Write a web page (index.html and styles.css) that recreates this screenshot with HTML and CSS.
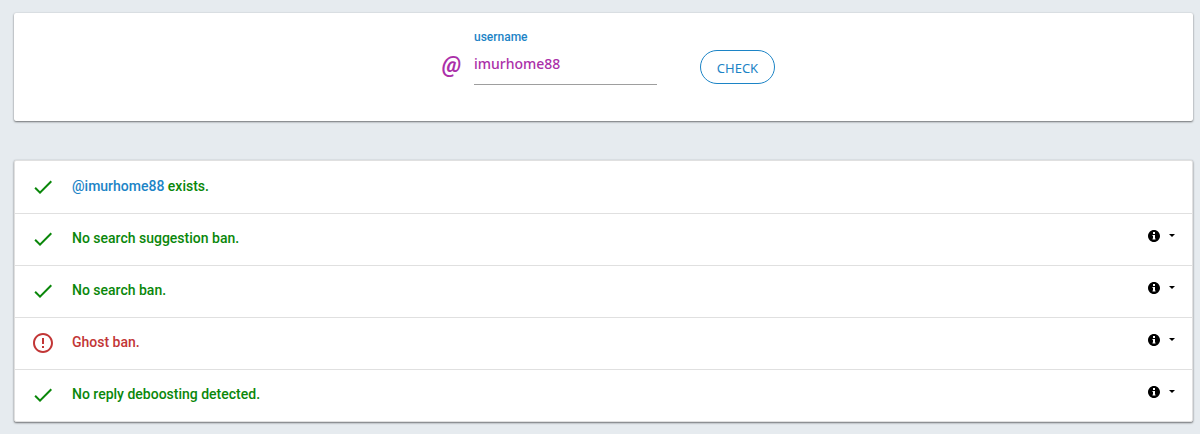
FILE: index.html
```html
<!DOCTYPE html>
<html lang="en">
<head>
    <meta charset="UTF-8">
    <meta name="viewport" content="width=device-width, initial-scale=1.0">
    <title>Shadowban Test</title>
    <link rel="stylesheet" href="styles.css">
</head>
<body>
    <!-- Shared icons -->
    <svg class="icon-defs" aria-hidden="true">
        <symbol id="icon-check" viewBox="0 0 24 24">
            <path d="M9 16.17L4.83 12l-1.42 1.41L9 19 21 7l-1.41-1.41z"/>
        </symbol>
        <symbol id="icon-error" viewBox="0 0 24 24">
            <path d="M11 15h2v2h-2zm0-8h2v6h-2zm.99-5C6.47 2 2 6.48 2 12s4.47 10 9.99 10C17.52 22 22 17.52 22 12S17.52 2 11.99 2zM12 20c-4.42 0-8-3.58-8-8s3.58-8 8-8 8 3.58 8 8-3.58 8-8 8z"/>
        </symbol>
        <symbol id="icon-info" viewBox="0 0 24 24">
            <path d="M12 0C5.4 0 0 5.4 0 12s5.400 12 12 12 12-5.400 12-12S18.600 0 12 0zm3 19H9v-2h1v-5H9v-2h5v7h1zM10 8V4h4v4z"/>
        </symbol>
        <symbol id="icon-caret" viewBox="0 0 6 3">
            <path d="M0 0h6L3 3z"/>
        </symbol>
    </svg>

    <main class="container">
        <form class="card search" onsubmit="return false">
            <span class="prefix">@</span>
            <div class="input-field">
                <label for="screenName">username</label>
                <input type="text" id="screenName" value="imurhome88" spellcheck="false" autocomplete="off">
            </div>
            <button class="check-button" type="submit">CHECK</button>
        </form>

        <ul class="card results">
            <li class="result">
                <svg class="status-icon"><use href="#icon-check"/></svg>
                <span class="message"><a href="#imurhome88">@imurhome88</a> exists.</span>
            </li>
            <li class="result">
                <svg class="status-icon"><use href="#icon-check"/></svg>
                <span class="message">No search suggestion ban.</span>
                <button class="info" type="button" aria-label="About search suggestion bans">
                    <svg class="info-icon"><use href="#icon-info"/></svg>
                    <svg class="caret"><use href="#icon-caret"/></svg>
                </button>
            </li>
            <li class="result">
                <svg class="status-icon"><use href="#icon-check"/></svg>
                <span class="message">No search ban.</span>
                <button class="info" type="button" aria-label="About search bans">
                    <svg class="info-icon"><use href="#icon-info"/></svg>
                    <svg class="caret"><use href="#icon-caret"/></svg>
                </button>
            </li>
            <li class="result failed">
                <svg class="status-icon"><use href="#icon-error"/></svg>
                <span class="message">Ghost ban.</span>
                <button class="info" type="button" aria-label="About ghost bans">
                    <svg class="info-icon"><use href="#icon-info"/></svg>
                    <svg class="caret"><use href="#icon-caret"/></svg>
                </button>
            </li>
            <li class="result">
                <svg class="status-icon"><use href="#icon-check"/></svg>
                <span class="message">No reply deboosting detected.</span>
                <button class="info" type="button" aria-label="About reply deboosting">
                    <svg class="info-icon"><use href="#icon-info"/></svg>
                    <svg class="caret"><use href="#icon-caret"/></svg>
                </button>
            </li>
        </ul>
    </main>
</body>
</html>
```
FILE: styles.css
```css
/* General Styles */
* {
    box-sizing: border-box;
}

body {
    margin: 0;
    font-family: Roboto, sans-serif;
    font-size: 14px;
    background-color: #e6ebef;
}

.icon-defs {
    display: none;
}

.container {
    padding: 13px 7px 12px 14px;
}

.card {
    background-color: #fff;
    border-radius: 2px;
    box-shadow: 0 1px 2px rgba(0, 0, 0, 0.5), 0 0 2px rgba(0, 0, 0, 0.1);
}

/* Search Form Styles */
.search {
    display: flex;
    justify-content: center;
    align-items: flex-start;
    padding: 16px 0 36px 10px;
}

.prefix {
    width: 32px;
    margin-top: 20px;
    font-size: 22px;
    font-style: italic;
    font-weight: 700;
    line-height: 32px;
    color: #ab2fa9;
}

.input-field {
    width: 183px;
    margin-right: 43px;
}

.input-field label {
    display: block;
    font-size: 12px;
    font-weight: 500;
    line-height: 16px;
    color: #1c84c6;
}

.input-field input {
    display: block;
    width: 100%;
    height: 40px;
    padding: 0 0 2px;
    border: none;
    border-bottom: 1px solid #9e9e9e;
    outline: none;
    background: none;
    font-family: "Noto Sans", sans-serif;
    font-size: 14px;
    font-weight: 500;
    color: #ab2fa9;
}

.check-button {
    width: 75px;
    height: 34px;
    margin-top: 21px;
    padding: 2px 0 0;
    border: 1px solid #1c84c6;
    border-radius: 17px;
    background: none;
    font-family: "Noto Sans", sans-serif;
    font-size: 13px;
    color: #1c84c6;
    cursor: pointer;
}

/* Result List Styles */
.results {
    margin: 39px 0 0;
    padding: 0;
    border: 1px solid #e0e0e0;
    list-style: none;
}

.result {
    display: flex;
    align-items: center;
    height: 52px;
    padding: 0 16px;
    border-top: 1px solid #e0e0e0;
    color: #0a870a;
}

.result:first-child {
    border-top-color: transparent;
}

.failed {
    color: #c23636;
}

.status-icon {
    width: 24px;
    height: 24px;
    margin: 0 17px 2px 0;
    fill: currentColor;
}

.message {
    flex: 1;
    font-weight: 500;
    line-height: 20px;
    padding-bottom: 4px;
}

.message a {
    color: #1c84c6;
    text-decoration: none;
}

.info {
    display: flex;
    align-items: center;
    gap: 9px;
    padding: 0 1px 8px;
    border: none;
    background: none;
    cursor: pointer;
}

.info-icon {
    width: 12px;
    height: 12px;
}

.caret {
    width: 6px;
    height: 3px;
}
```
